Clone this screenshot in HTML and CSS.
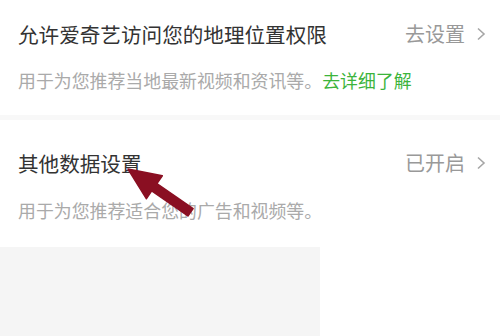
FILE: index.html
```html
<!DOCTYPE html>
<html lang="zh">
<head>
<meta charset="utf-8">
<link rel="stylesheet" href="styles.css">
</head>
<body>
<div class="page">
  <section class="item first">
    <div class="row">
      <span class="title">允许爱奇艺访问您的地理位置权限</span>
      <span class="action">去设置<svg class="chev" width="10" height="14" viewBox="0 0 10 14"><path d="M2 1.5 L8 7 L2 12.5" fill="none" stroke="#a6a6a6" stroke-width="1.6"/></svg></span>
    </div>
    <p class="desc">用于为您推荐当地最新视频和资讯等。<span class="link">去详细了解</span></p>
  </section>
  <div class="sep"></div>
  <section class="item second">
    <div class="row">
      <span class="title">其他数据设置</span>
      <span class="action">已开启<svg class="chev" width="10" height="14" viewBox="0 0 10 14"><path d="M2 1.5 L8 7 L2 12.5" fill="none" stroke="#a6a6a6" stroke-width="1.6"/></svg></span>
    </div>
    <p class="desc">用于为您推荐适合您的广告和视频等。</p>
  </section>
  <div class="bottom"><div class="gray"></div></div>
  <svg class="arrow" width="500" height="336" viewBox="0 0 500 336">
    <polygon points="128,169 162.3,175.7 156.9,183.5 193.1,208.6 187.9,216 151.7,190.9 146.3,198.7" fill="#8a0f22" stroke="#8a0f22" stroke-width="1.5" stroke-linejoin="round"/>
  </svg>
</div>
</body>
</html>
```
FILE: styles.css
```css
* { box-sizing: border-box; }
html, body { margin: 0; padding: 0; background: #fff; }
.page {
  position: relative;
  width: 500px;
  height: 336px;
  overflow: hidden;
  font-family: "Noto Sans CJK SC", "Noto Sans", sans-serif;
}
.item { padding: 0 14px 0 18px; }
.item.first { padding-top: 20px; padding-bottom: 23px; }
.item.second { padding-top: 29px; padding-bottom: 25px; }
.row {
  display: flex;
  justify-content: space-between;
  align-items: center;
  height: 28px;
}
.title {
  font-size: 20.6px;
  line-height: 28px;
  color: #333;
}
.action {
  display: flex;
  align-items: center;
  font-size: 20px;
  line-height: 28px;
  color: #999;
}
.chev { margin-left: 11px; }
.desc {
  margin: 20px 0 0;
  font-size: 17.9px;
  line-height: 24px;
  color: #aaa;
}
.item.second .desc { margin-top: 21px; }
.link { color: #3cb43c; }
.sep { height: 5px; background: #f8f8f8; }
.bottom { height: 89px; display: flex; }
.gray { width: 320px; background: #f5f5f5; }
.arrow { position: absolute; left: 0; top: 0; }
```
